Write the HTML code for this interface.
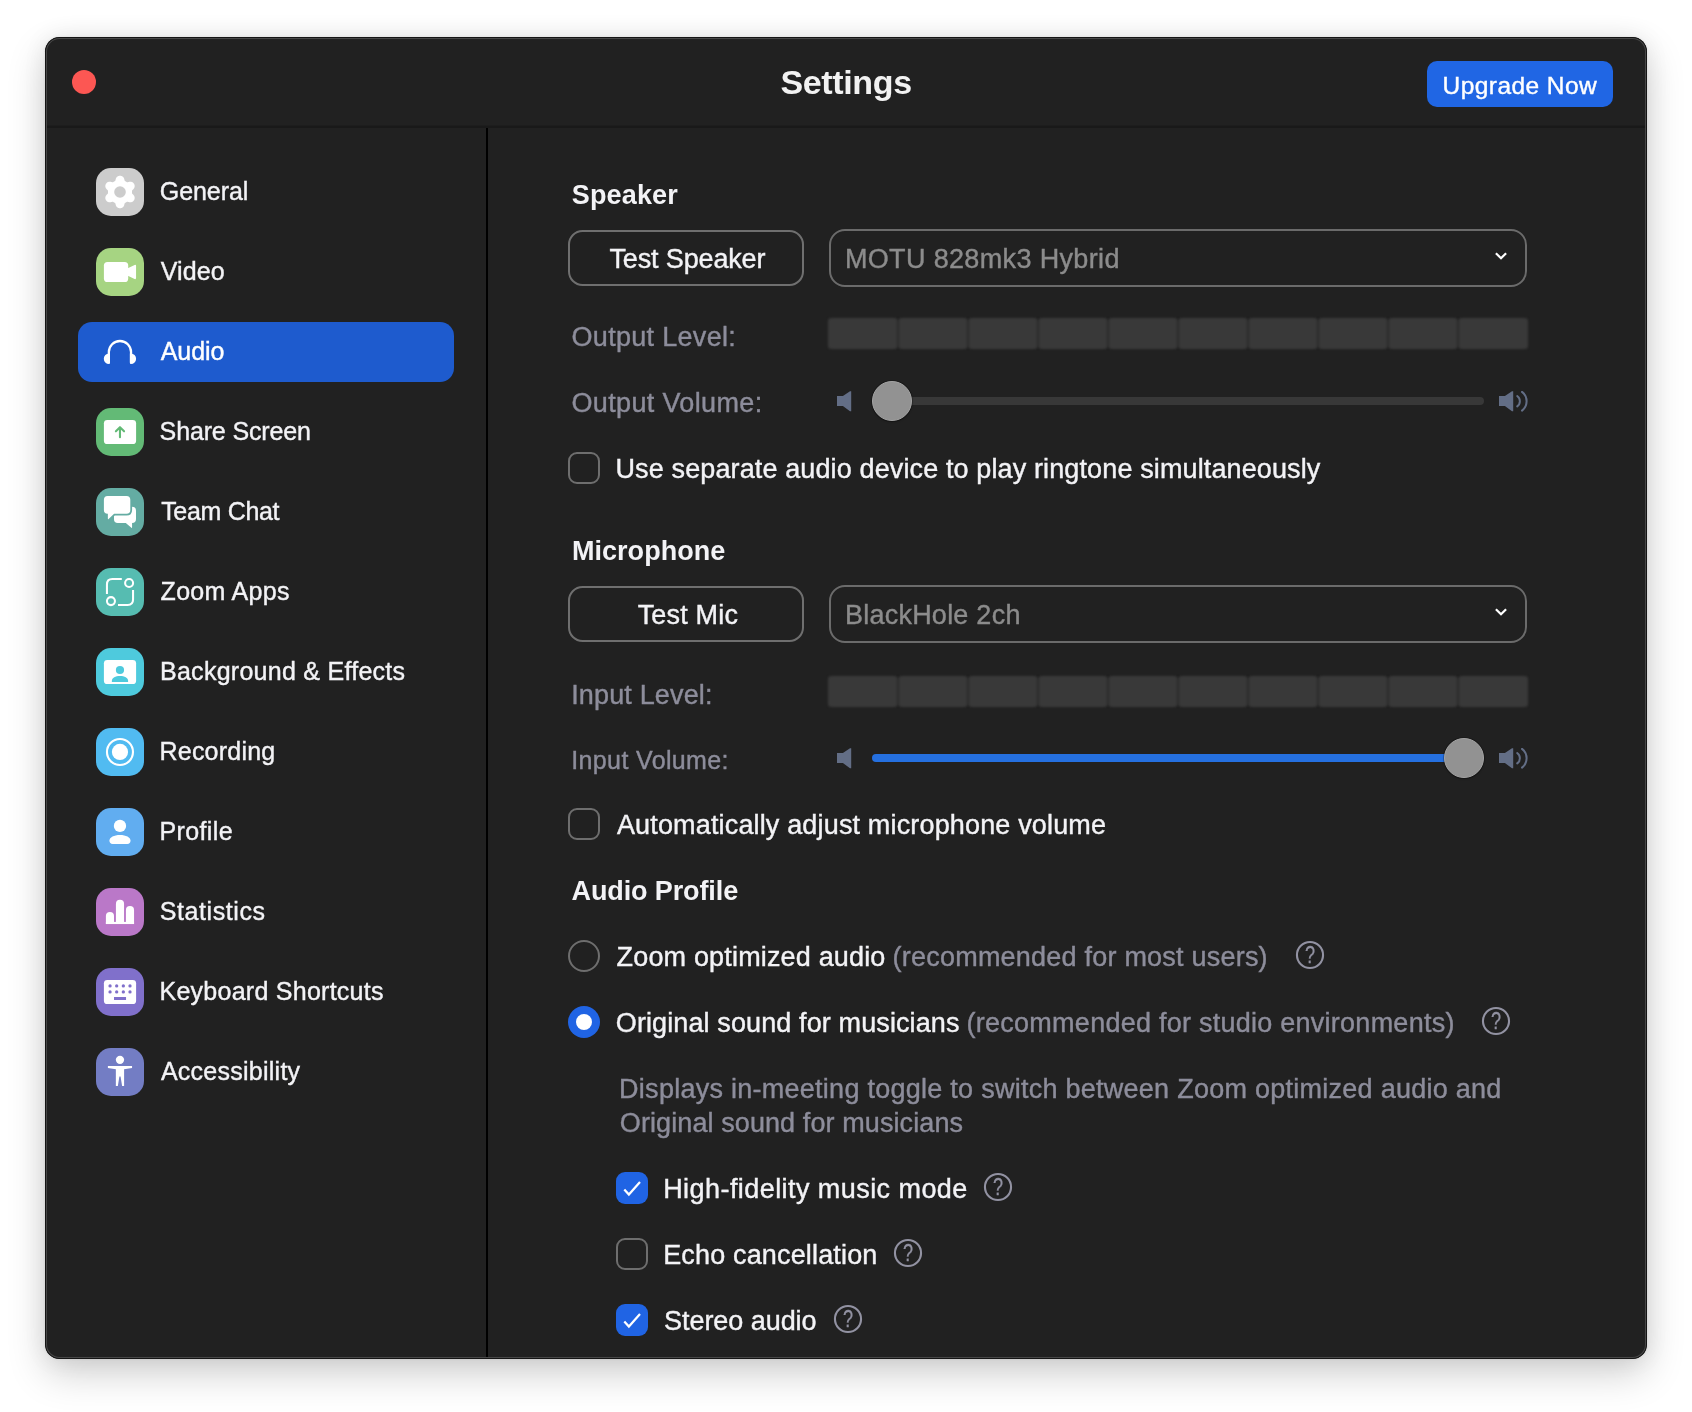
<!DOCTYPE html>
<html lang="en"><head><meta charset="utf-8"><title>Settings</title>
<style>
html,body{margin:0;padding:0;}
body{width:1692px;height:1412px;background:#ffffff;position:relative;overflow:hidden;font-family:"Liberation Sans",Arial,sans-serif;}
.shadow{position:absolute;left:45px;top:37px;width:1602px;height:1322px;border-radius:14.5px;
  box-shadow:0 15px 38px rgba(0,0,0,0.185),0 0 24px rgba(0,0,0,0.07),0 0 3px rgba(0,0,0,0.08);}
.window{position:absolute;left:45px;top:37px;width:1602px;height:1322px;border-radius:14.5px;background:#212121;overflow:hidden;}
.window:after{content:"";position:absolute;left:0;top:0;right:0;bottom:0;border-radius:14.5px;box-shadow:inset 0 0 0 1px #151515,inset 0 0 0 2px #474747;pointer-events:none;}
.abs,.t,.window div,.window svg,.window button{position:absolute;}
.t{white-space:pre;display:block;-webkit-text-stroke:0.4px currentColor;}
.t.b{-webkit-text-stroke:0;}
.layer{position:absolute;left:-45px;top:-37px;width:1692px;height:1412px;will-change:transform;}
.hline{left:45px;top:125px;width:1602px;height:3px;background:linear-gradient(#1d1d1d 0,#1d1d1d 33%,#191919 33%,#191919 100%);}
.vline{left:486px;top:128px;width:2px;height:1232px;background:#000000;}
.close{left:72px;top:70px;width:24px;height:24px;border-radius:50%;background:#fc5753;}
.upgrade{left:1427px;top:61px;width:186px;height:46px;border-radius:10px;background:#2066e4;}
.sel{left:78px;top:322px;width:376px;height:60px;border-radius:14px;background:#1e5bce;}
.ico{width:48px;height:48px;border-radius:15px;left:96px;}
.btn{border:2px solid #6f6f6f;border-radius:14.5px;box-sizing:border-box;background:transparent;}
.dd{border:2px solid #6b6b6b;border-radius:16px;box-sizing:border-box;}
.seg{width:68.4px;height:31.8px;background:#393939;border-radius:3px;filter:blur(0.9px);}
.segbg{width:692px;height:29.8px;background:#2c2c2c;filter:blur(0.9px);}
.track{height:8px;border-radius:4px;background:#383838;}
.track.on{background:#2570e0;}
.thumb{width:40px;height:40px;border-radius:50%;background:#929292;box-sizing:border-box;border:1px solid #a4a4a4;box-shadow:0 0 0 1px rgba(0,0,0,0.22),0 1px 2px rgba(0,0,0,0.25);}
.cb{width:32px;height:32px;box-sizing:border-box;border:2px solid #6e6e6e;border-radius:9px;}
.cb.on{border:none;background:#2064e4;}
.rb{width:32px;height:32px;box-sizing:border-box;border:2px solid #6e6e6e;border-radius:50%;}
.rb.on{border:none;background:#2064e4;}
.rb.on:after{content:"";position:absolute;left:8px;top:8px;width:16px;height:16px;border-radius:50%;background:#ffffff;}
</style></head>
<body>
<div class="shadow"></div>
<div class="window"><div class="layer">
<div class="hline"></div><div class="vline"></div>
<div class="close"></div>
<span class="t b" style="left:780.5px;top:65.00px;font-size:34px;line-height:34px;color:#f2f2f2;letter-spacing:-0.369px;font-weight:700;">Settings</span>
<button class="upgrade" style="border:none"></button><span class="t" style="left:1442.5px;top:74.00px;font-size:24.5px;line-height:24.5px;color:#ffffff;letter-spacing:0.446px;">Upgrade Now</span>
<div class="sidebar" style="left:0;top:0">
<div class="sel"></div>
<div class="ico" style="top:168px;background:#cccccc"><svg width="48" height="48" viewBox="0 0 48 48" style="left:0;top:0"><path d="M24.00 7.74 L24.28 7.75 L24.57 7.77 L24.85 7.82 L25.13 7.88 L25.40 7.97 L25.67 8.07 L25.94 8.19 L26.20 8.33 L26.46 8.49 L26.70 8.67 L26.94 8.87 L27.17 9.09 L27.39 9.34 L27.59 9.61 L27.78 9.91 L27.95 10.24 L28.10 10.60 L28.23 10.99 L28.34 11.40 L28.44 11.80 L28.54 12.17 L28.65 12.49 L28.78 12.75 L28.93 12.94 L29.09 13.08 L29.27 13.20 L29.45 13.30 L29.63 13.40 L29.82 13.50 L30.00 13.61 L30.18 13.71 L30.36 13.82 L30.54 13.93 L30.72 14.04 L30.91 14.13 L31.12 14.20 L31.36 14.24 L31.64 14.22 L31.97 14.15 L32.35 14.05 L32.75 13.94 L33.15 13.83 L33.56 13.75 L33.95 13.70 L34.32 13.68 L34.67 13.70 L35.01 13.74 L35.33 13.80 L35.63 13.89 L35.93 13.99 L36.20 14.12 L36.47 14.26 L36.72 14.41 L36.96 14.58 L37.18 14.77 L37.39 14.97 L37.59 15.18 L37.77 15.40 L37.93 15.63 L38.08 15.87 L38.22 16.12 L38.34 16.38 L38.44 16.64 L38.52 16.92 L38.59 17.20 L38.63 17.48 L38.66 17.78 L38.67 18.07 L38.66 18.37 L38.63 18.68 L38.57 18.98 L38.50 19.29 L38.39 19.60 L38.26 19.91 L38.09 20.22 L37.89 20.54 L37.65 20.85 L37.38 21.16 L37.09 21.46 L36.79 21.75 L36.51 22.02 L36.29 22.27 L36.14 22.51 L36.04 22.73 L36.00 22.95 L35.99 23.16 L35.99 23.37 L35.99 23.58 L36.00 23.79 L36.00 24.00 L36.00 24.21 L35.99 24.42 L35.99 24.63 L35.99 24.84 L36.00 25.05 L36.04 25.27 L36.14 25.49 L36.29 25.73 L36.51 25.98 L36.79 26.25 L37.09 26.54 L37.38 26.84 L37.65 27.15 L37.89 27.46 L38.09 27.78 L38.26 28.09 L38.39 28.40 L38.50 28.71 L38.57 29.02 L38.63 29.32 L38.66 29.63 L38.67 29.93 L38.66 30.22 L38.63 30.52 L38.59 30.80 L38.52 31.08 L38.44 31.36 L38.34 31.62 L38.22 31.88 L38.08 32.13 L37.93 32.37 L37.77 32.60 L37.59 32.82 L37.39 33.03 L37.18 33.23 L36.96 33.42 L36.72 33.59 L36.47 33.74 L36.20 33.88 L35.93 34.01 L35.63 34.11 L35.33 34.20 L35.01 34.26 L34.67 34.30 L34.32 34.32 L33.95 34.30 L33.56 34.25 L33.15 34.17 L32.75 34.06 L32.35 33.95 L31.97 33.85 L31.64 33.78 L31.36 33.76 L31.12 33.80 L30.91 33.87 L30.72 33.96 L30.54 34.07 L30.36 34.18 L30.18 34.29 L30.00 34.39 L29.82 34.50 L29.63 34.60 L29.45 34.70 L29.27 34.80 L29.09 34.92 L28.93 35.06 L28.78 35.25 L28.65 35.51 L28.54 35.83 L28.44 36.20 L28.34 36.60 L28.23 37.01 L28.10 37.40 L27.95 37.76 L27.78 38.09 L27.59 38.39 L27.39 38.66 L27.17 38.91 L26.94 39.13 L26.70 39.33 L26.46 39.51 L26.20 39.67 L25.94 39.81 L25.67 39.93 L25.40 40.03 L25.13 40.12 L24.85 40.18 L24.57 40.23 L24.28 40.25 L24.00 40.26 L23.72 40.25 L23.43 40.23 L23.15 40.18 L22.87 40.12 L22.60 40.03 L22.33 39.93 L22.06 39.81 L21.80 39.67 L21.54 39.51 L21.30 39.33 L21.06 39.13 L20.83 38.91 L20.61 38.66 L20.41 38.39 L20.22 38.09 L20.05 37.76 L19.90 37.40 L19.77 37.01 L19.66 36.60 L19.56 36.20 L19.46 35.83 L19.35 35.51 L19.22 35.25 L19.07 35.06 L18.91 34.92 L18.73 34.80 L18.55 34.70 L18.37 34.60 L18.18 34.50 L18.00 34.39 L17.82 34.29 L17.64 34.18 L17.46 34.07 L17.28 33.96 L17.09 33.87 L16.88 33.80 L16.64 33.76 L16.36 33.78 L16.03 33.85 L15.65 33.95 L15.25 34.06 L14.85 34.17 L14.44 34.25 L14.05 34.30 L13.68 34.32 L13.33 34.30 L12.99 34.26 L12.67 34.20 L12.37 34.11 L12.07 34.01 L11.80 33.88 L11.53 33.74 L11.28 33.59 L11.04 33.42 L10.82 33.23 L10.61 33.03 L10.41 32.82 L10.23 32.60 L10.07 32.37 L9.92 32.13 L9.78 31.88 L9.66 31.62 L9.56 31.36 L9.48 31.08 L9.41 30.80 L9.37 30.52 L9.34 30.22 L9.33 29.93 L9.34 29.63 L9.37 29.32 L9.43 29.02 L9.50 28.71 L9.61 28.40 L9.74 28.09 L9.91 27.78 L10.11 27.46 L10.35 27.15 L10.62 26.84 L10.91 26.54 L11.21 26.25 L11.49 25.98 L11.71 25.73 L11.86 25.49 L11.96 25.27 L12.00 25.05 L12.01 24.84 L12.01 24.63 L12.01 24.42 L12.00 24.21 L12.00 24.00 L12.00 23.79 L12.01 23.58 L12.01 23.37 L12.01 23.16 L12.00 22.95 L11.96 22.73 L11.86 22.51 L11.71 22.27 L11.49 22.02 L11.21 21.75 L10.91 21.46 L10.62 21.16 L10.35 20.85 L10.11 20.54 L9.91 20.22 L9.74 19.91 L9.61 19.60 L9.50 19.29 L9.43 18.98 L9.37 18.68 L9.34 18.37 L9.33 18.07 L9.34 17.78 L9.37 17.48 L9.41 17.20 L9.48 16.92 L9.56 16.64 L9.66 16.38 L9.78 16.12 L9.92 15.87 L10.07 15.63 L10.23 15.40 L10.41 15.18 L10.61 14.97 L10.82 14.77 L11.04 14.58 L11.28 14.41 L11.53 14.26 L11.80 14.12 L12.07 13.99 L12.37 13.89 L12.67 13.80 L12.99 13.74 L13.33 13.70 L13.68 13.68 L14.05 13.70 L14.44 13.75 L14.85 13.83 L15.25 13.94 L15.65 14.05 L16.03 14.15 L16.36 14.22 L16.64 14.24 L16.88 14.20 L17.09 14.13 L17.28 14.04 L17.46 13.93 L17.64 13.82 L17.82 13.71 L18.00 13.61 L18.18 13.50 L18.37 13.40 L18.55 13.30 L18.73 13.20 L18.91 13.08 L19.07 12.94 L19.22 12.75 L19.35 12.49 L19.46 12.17 L19.56 11.80 L19.66 11.40 L19.77 10.99 L19.90 10.60 L20.05 10.24 L20.22 9.91 L20.41 9.61 L20.61 9.34 L20.83 9.09 L21.06 8.87 L21.30 8.67 L21.54 8.49 L21.80 8.33 L22.06 8.19 L22.33 8.07 L22.60 7.97 L22.87 7.88 L23.15 7.82 L23.43 7.77 L23.72 7.75 Z" fill="#ffffff"/><circle cx="24" cy="24" r="5.8" fill="#cccccc"/></svg></div>
<span class="t" style="left:159.8px;top:179.00px;font-size:25px;line-height:25px;color:#f3f3f6;letter-spacing:-0.073px;">General</span>
<div class="ico" style="top:248px;background:#a6d482"><svg width="48" height="48" viewBox="0 0 48 48" style="left:0;top:0"><g fill="#ffffff"><rect x="7.9" y="13.9" width="24.3" height="20.2" rx="3.6"/><path d="M31.8 20.3 L38.6 16.95 Q40.05 16.4 40.05 17.9 V30.1 Q40.05 31.6 38.6 31.05 L31.8 27.7 Z"/></g></svg></div>
<span class="t" style="left:160.8px;top:259.00px;font-size:25px;line-height:25px;color:#f3f3f6;letter-spacing:0.074px;">Video</span>
<div class="ico" style="top:328px;background:transparent"><svg width="48" height="48" viewBox="0 0 48 48" style="left:0;top:0"><path d="M12.85 34.6 V24.1 A11.1 11.1 0 0 1 35.05 24.1 V34.6" fill="none" stroke="#ffffff" stroke-width="2.3"/><g fill="#ffffff"><path d="M14 25.55 H13 A5.2 5.27 0 0 0 13 36.1 Q14 36.1 14 35 Z"/><path d="M33.9 25.55 H34.9 A5.2 5.27 0 0 1 34.9 36.1 Q33.9 36.1 33.9 35 Z"/></g></svg></div>
<span class="t" style="left:160.8px;top:339.00px;font-size:25px;line-height:25px;color:#ffffff;letter-spacing:-0.098px;">Audio</span>
<div class="ico" style="top:408px;background:#63ba76"><svg width="48" height="48" viewBox="0 0 48 48" style="left:0;top:0"><rect x="7.9" y="11.9" width="32.2" height="24.15" rx="3.4" fill="#ffffff"/><path d="M23.97 29.2 V19.4 M19.9 23.3 L23.97 19.2 L28.05 23.3" fill="none" stroke="#63ba76" stroke-width="2.1" stroke-linecap="round" stroke-linejoin="round"/></svg></div>
<span class="t" style="left:159.6px;top:419.00px;font-size:25px;line-height:25px;color:#f3f3f6;letter-spacing:-0.137px;">Share Screen</span>
<div class="ico" style="top:488px;background:#64aca3"><svg width="48" height="48" viewBox="0 0 48 48" style="left:0;top:0"><path d="M21.8 18.8 H36 Q40 18.8 40 22.8 V31.1 Q40 35.1 36.06 35.1 V39.4 Q36.06 40.2 35.4 39.7 L29.8 35.1 H21.8 Q18 35.1 18 31.3 V22.6 Q18 18.8 21.8 18.8 Z" fill="#ffffff"/><path d="M11.6 7.9 H30.5 Q34.3 7.9 34.3 11.7 V21.95 Q34.3 25.75 30.5 25.75 H18.1 L12.6 30.9 Q11.87 31.5 11.87 30.5 V25.75 H11.6 Q7.9 25.75 7.9 22 V11.7 Q7.9 7.9 11.6 7.9 Z" fill="#ffffff" stroke="#64aca3" stroke-width="3.6" paint-order="stroke" stroke-linejoin="round"/></svg></div>
<span class="t" style="left:161.2px;top:499.00px;font-size:25px;line-height:25px;color:#f3f3f6;letter-spacing:-0.313px;">Team Chat</span>
<div class="ico" style="top:568px;background:#56bcb1"><svg width="48" height="48" viewBox="0 0 48 48" style="left:0;top:0"><g fill="none" stroke="#ffffff" stroke-width="2.05"><path d="M25.8 10.95 H16.4 Q10.95 10.95 10.95 16.4 V25.95"/><path d="M22 37.05 H31.6 Q37.05 37.05 37.05 31.6 V22"/><circle cx="33.1" cy="15" r="4"/><circle cx="14.95" cy="33.1" r="4"/></g></svg></div>
<span class="t" style="left:160.6px;top:579.00px;font-size:25px;line-height:25px;color:#f3f3f6;letter-spacing:0.298px;">Zoom Apps</span>
<div class="ico" style="top:648px;background:#4ecadd"><svg width="48" height="48" viewBox="0 0 48 48" style="left:0;top:0"><rect x="7.9" y="11.9" width="32.2" height="24.15" rx="3.4" fill="#ffffff"/><circle cx="23.97" cy="22" r="4.1" fill="#4ecadd"/><path d="M15.85 33.9 V32.7 C15.85 29.9 19.5 27.95 23.97 27.95 C28.5 27.95 32.1 29.9 32.1 32.7 V33.9 Z" fill="#4ecadd"/></svg></div>
<span class="t" style="left:160.0px;top:659.00px;font-size:25px;line-height:25px;color:#f3f3f6;letter-spacing:0.269px;">Background &amp; Effects</span>
<div class="ico" style="top:728px;background:#51bbf1"><svg width="48" height="48" viewBox="0 0 48 48" style="left:0;top:0"><circle cx="23.97" cy="23.97" r="13" fill="none" stroke="#ffffff" stroke-width="2.1"/><circle cx="23.97" cy="23.97" r="8.1" fill="#ffffff"/></svg></div>
<span class="t" style="left:159.5px;top:739.00px;font-size:25px;line-height:25px;color:#f3f3f6;letter-spacing:0.215px;">Recording</span>
<div class="ico" style="top:808px;background:#61adf0"><svg width="48" height="48" viewBox="0 0 48 48" style="left:0;top:0"><g fill="#ffffff"><circle cx="23.97" cy="17.95" r="6.15"/><path d="M13.45 32.6 C13.45 29.3 18 26.95 23.97 26.95 C30 26.95 34.5 29.3 34.5 32.6 C34.5 34.8 33.3 36.05 31.4 36.05 H16.55 C14.65 36.05 13.45 34.8 13.45 32.6 Z"/></g></svg></div>
<span class="t" style="left:159.5px;top:819.00px;font-size:25px;line-height:25px;color:#f3f3f6;letter-spacing:0.371px;">Profile</span>
<div class="ico" style="top:888px;background:#ba78c8"><svg width="48" height="48" viewBox="0 0 48 48" style="left:0;top:0"><g fill="#ffffff"><path d="M9.9 36.05 V28 A4.05 4.05 0 0 1 18 28 V36.05 Z"/><path d="M19.92 36.05 V15.9 A4.06 4.06 0 0 1 28.05 15.9 V36.05 Z"/><path d="M29.92 36.05 V21.95 A4.06 4.06 0 0 1 38.05 21.95 V36.05 Z"/><rect x="9.9" y="33.9" width="28.15" height="2.15"/></g></svg></div>
<span class="t" style="left:159.8px;top:899.00px;font-size:25px;line-height:25px;color:#f3f3f6;letter-spacing:0.574px;">Statistics</span>
<div class="ico" style="top:968px;background:#8070cb"><svg width="48" height="48" viewBox="0 0 48 48" style="left:0;top:0"><rect x="7.9" y="11.9" width="32.2" height="24.15" rx="3.4" fill="#ffffff"/><g fill="#8070cb"><circle cx="14.05" cy="17.95" r="1.65"/><circle cx="20.67" cy="17.95" r="1.65"/><circle cx="27.34" cy="17.95" r="1.65"/><circle cx="34.0" cy="17.95" r="1.65"/><circle cx="14.05" cy="23.97" r="1.65"/><circle cx="20.67" cy="23.97" r="1.65"/><circle cx="27.34" cy="23.97" r="1.65"/><circle cx="34.0" cy="23.97" r="1.65"/><rect x="18" y="29" width="12.05" height="3"/></g></svg></div>
<span class="t" style="left:159.5px;top:979.00px;font-size:25px;line-height:25px;color:#f3f3f6;letter-spacing:0.259px;">Keyboard Shortcuts</span>
<div class="ico" style="top:1048px;background:#737dc4"><svg width="48" height="48" viewBox="0 0 48 48" style="left:0;top:0"><g fill="#ffffff"><circle cx="23.97" cy="11.87" r="4.15"/><path d="M11.9 17.95 H36.05 V20 L28.1 21.25 V38 H26.1 L24.55 28.6 H23.4 L21.85 38 H19.85 V21.25 L11.9 20 Z"/></g></svg></div>
<span class="t" style="left:160.9px;top:1059.00px;font-size:25px;line-height:25px;color:#f3f3f6;letter-spacing:0.257px;">Accessibility</span>
</div>
<div class="content" style="left:0;top:0">
<span class="t b" style="left:571.8px;top:182.00px;font-size:27px;line-height:27px;color:#f3f3f6;letter-spacing:0.151px;font-weight:700;">Speaker</span>
<button class="btn" style="left:568px;top:230px;width:236px;height:56px"></button>
<span class="t" style="left:609.5px;top:246.00px;font-size:27px;line-height:27px;color:#f3f3f6;letter-spacing:-0.146px;">Test Speaker</span>
<div class="dd" style="left:829px;top:229px;width:698px;height:58px"></div>
<span class="t" style="left:844.9px;top:246.00px;font-size:27px;line-height:27px;color:#8c8c8c;letter-spacing:0.350px;">MOTU 828mk3 Hybrid</span>
<svg style="left:1493px;top:249.6px" width="16" height="12" viewBox="0 0 16 12"><path d="M2.9 3.2 L8 8.3 L13.1 3.2" fill="none" stroke="#ffffff" stroke-width="2.2" stroke-linecap="butt" stroke-linejoin="miter"/></svg>
<span class="t" style="left:571.5px;top:324.00px;font-size:27px;line-height:27px;color:#8d8d9b;letter-spacing:0.304px;">Output Level:</span>
<div class="segbg" style="left:832px;top:318.7px"></div><div class="seg" style="left:828px;top:317.7px;width:68.6px"></div><div class="seg" style="left:899px;top:317.7px;width:67.6px"></div><div class="seg" style="left:969px;top:317.7px;width:67.6px"></div><div class="seg" style="left:1039px;top:317.7px;width:67.6px"></div><div class="seg" style="left:1109px;top:317.7px;width:67.6px"></div><div class="seg" style="left:1179px;top:317.7px;width:67.6px"></div><div class="seg" style="left:1249px;top:317.7px;width:67.6px"></div><div class="seg" style="left:1319px;top:317.7px;width:67.6px"></div><div class="seg" style="left:1389px;top:317.7px;width:67.6px"></div><div class="seg" style="left:1459px;top:317.7px;width:68.9px"></div>
<span class="t" style="left:571.5px;top:390.00px;font-size:27px;line-height:27px;color:#8d8d9b;letter-spacing:0.349px;">Output Volume:</span>
<svg style="left:836.9px;top:391px" width="16" height="22" viewBox="0 0 16 22"><path d="M0 5 H5.9 L13 0.25 H14.2 V20.3 H13 L5.9 15.05 H0 Z" fill="#636e86"/></svg>
<div class="track" style="left:872px;top:397px;width:612px"></div>
<div class="thumb" style="left:872px;top:381px"></div>
<svg style="left:1498.8px;top:391px" width="32" height="22" viewBox="0 0 32 22"><path d="M0 5 H5.9 L13 0.25 H14.2 V20.3 H13 L5.9 15.05 H0 Z" fill="#636e86"/><path d="M18.2 5 A6.4 6.4 0 0 1 18.2 15.4" fill="none" stroke="#636e86" stroke-width="2" stroke-linecap="round"/><path d="M23 0.9 A11.8 11.8 0 0 1 23 19.6" fill="none" stroke="#636e86" stroke-width="2" stroke-linecap="round"/></svg>
<div class="cb" style="left:568px;top:452px"></div>
<span class="t" style="left:615.5px;top:456.00px;font-size:27px;line-height:27px;color:#f3f3f6;letter-spacing:0.124px;">Use separate audio device to play ringtone simultaneously</span>
<span class="t b" style="left:571.9px;top:538.00px;font-size:27px;line-height:27px;color:#f3f3f6;letter-spacing:0.051px;font-weight:700;">Microphone</span>
<button class="btn" style="left:568px;top:586px;width:236px;height:56px"></button>
<span class="t" style="left:637.7px;top:602.00px;font-size:27px;line-height:27px;color:#f3f3f6;letter-spacing:0.182px;">Test Mic</span>
<div class="dd" style="left:829px;top:585px;width:698px;height:58px"></div>
<span class="t" style="left:844.9px;top:602.00px;font-size:27px;line-height:27px;color:#8c8c8c;letter-spacing:0.243px;">BlackHole 2ch</span>
<svg style="left:1493px;top:605.6px" width="16" height="12" viewBox="0 0 16 12"><path d="M2.9 3.2 L8 8.3 L13.1 3.2" fill="none" stroke="#ffffff" stroke-width="2.2" stroke-linecap="butt" stroke-linejoin="miter"/></svg>
<span class="t" style="left:571.2px;top:682.00px;font-size:27px;line-height:27px;color:#8d8d9b;letter-spacing:0.155px;">Input Level:</span>
<div class="segbg" style="left:832px;top:676.7px"></div><div class="seg" style="left:828px;top:675.7px;width:68.6px"></div><div class="seg" style="left:899px;top:675.7px;width:67.6px"></div><div class="seg" style="left:969px;top:675.7px;width:67.6px"></div><div class="seg" style="left:1039px;top:675.7px;width:67.6px"></div><div class="seg" style="left:1109px;top:675.7px;width:67.6px"></div><div class="seg" style="left:1179px;top:675.7px;width:67.6px"></div><div class="seg" style="left:1249px;top:675.7px;width:67.6px"></div><div class="seg" style="left:1319px;top:675.7px;width:67.6px"></div><div class="seg" style="left:1389px;top:675.7px;width:67.6px"></div><div class="seg" style="left:1459px;top:675.7px;width:68.9px"></div>
<span class="t" style="left:571.3px;top:748.00px;font-size:25px;line-height:25px;color:#8d8d9b;letter-spacing:0.358px;">Input Volume:</span>
<svg style="left:836.9px;top:748px" width="16" height="22" viewBox="0 0 16 22"><path d="M0 5 H5.9 L13 0.25 H14.2 V20.3 H13 L5.9 15.05 H0 Z" fill="#636e86"/></svg>
<div class="track on" style="left:872px;top:754px;width:600px"></div>
<div class="thumb" style="left:1444px;top:738px"></div>
<svg style="left:1498.8px;top:748px" width="32" height="22" viewBox="0 0 32 22"><path d="M0 5 H5.9 L13 0.25 H14.2 V20.3 H13 L5.9 15.05 H0 Z" fill="#636e86"/><path d="M18.2 5 A6.4 6.4 0 0 1 18.2 15.4" fill="none" stroke="#636e86" stroke-width="2" stroke-linecap="round"/><path d="M23 0.9 A11.8 11.8 0 0 1 23 19.6" fill="none" stroke="#636e86" stroke-width="2" stroke-linecap="round"/></svg>
<div class="cb" style="left:568px;top:808px"></div>
<span class="t" style="left:616.9px;top:812.00px;font-size:27px;line-height:27px;color:#f3f3f6;letter-spacing:0.160px;">Automatically adjust microphone volume</span>
<span class="t b" style="left:571.5px;top:878.00px;font-size:27px;line-height:27px;color:#f3f3f6;letter-spacing:-0.111px;font-weight:700;">Audio Profile</span>
<div class="rb" style="left:568px;top:940px"></div>
<span class="t" style="left:616.6px;top:944.00px;font-size:27px;line-height:27px;color:#f3f3f6;letter-spacing:0.165px;">Zoom optimized audio</span>
<span class="t" style="left:892.6px;top:944.00px;font-size:27px;line-height:27px;color:#8d8d9b;letter-spacing:0.218px;">(recommended for most users)</span>
<svg class="help" style="left:1294.0px;top:939.1px" width="32" height="32" viewBox="0 0 32 32"><circle cx="16" cy="16" r="13.05" fill="none" stroke="#9292a2" stroke-width="2.1"/><text x="0" y="24.2" text-anchor="middle" transform="translate(16.1 0) scale(0.78 1)" font-family="Liberation Sans, Arial, sans-serif" font-size="23.2" fill="#9292a2" stroke="#9292a2" stroke-width="0.3">?</text></svg>
<div class="rb on" style="left:568px;top:1006px"></div>
<span class="t" style="left:615.8px;top:1010.00px;font-size:27px;line-height:27px;color:#f3f3f6;letter-spacing:0.112px;">Original sound for musicians</span>
<span class="t" style="left:966.6px;top:1010.00px;font-size:27px;line-height:27px;color:#8d8d9b;letter-spacing:0.253px;">(recommended for studio environments)</span>
<svg class="help" style="left:1480.3px;top:1005.1px" width="32" height="32" viewBox="0 0 32 32"><circle cx="16" cy="16" r="13.05" fill="none" stroke="#9292a2" stroke-width="2.1"/><text x="0" y="24.2" text-anchor="middle" transform="translate(16.1 0) scale(0.78 1)" font-family="Liberation Sans, Arial, sans-serif" font-size="23.2" fill="#9292a2" stroke="#9292a2" stroke-width="0.3">?</text></svg>
<span class="t" style="left:619.1px;top:1076.00px;font-size:27px;line-height:27px;color:#8d8d9b;letter-spacing:0.262px;">Displays in-meeting toggle to switch between Zoom optimized audio and</span>
<span class="t" style="left:619.8px;top:1110.00px;font-size:27px;line-height:27px;color:#8d8d9b;letter-spacing:0.094px;">Original sound for musicians</span>
<div class="cb on" style="left:616px;top:1172px"><svg style="left:0;top:0" width="32" height="32" viewBox="0 0 32 32"><path d="M8.3 17.4 L12.9 22.6 L24 10" fill="none" stroke="#ffffff" stroke-width="2.2" stroke-linecap="butt" stroke-linejoin="miter"/></svg></div>
<span class="t" style="left:663.2px;top:1176.00px;font-size:27px;line-height:27px;color:#f3f3f6;letter-spacing:0.436px;">High-fidelity music mode</span>
<svg class="help" style="left:982.0px;top:1171.1px" width="32" height="32" viewBox="0 0 32 32"><circle cx="16" cy="16" r="13.05" fill="none" stroke="#9292a2" stroke-width="2.1"/><text x="0" y="24.2" text-anchor="middle" transform="translate(16.1 0) scale(0.78 1)" font-family="Liberation Sans, Arial, sans-serif" font-size="23.2" fill="#9292a2" stroke="#9292a2" stroke-width="0.3">?</text></svg>
<div class="cb" style="left:616px;top:1238px"></div>
<span class="t" style="left:663.2px;top:1242.00px;font-size:27px;line-height:27px;color:#f3f3f6;letter-spacing:0.157px;">Echo cancellation</span>
<svg class="help" style="left:892.0px;top:1237.1px" width="32" height="32" viewBox="0 0 32 32"><circle cx="16" cy="16" r="13.05" fill="none" stroke="#9292a2" stroke-width="2.1"/><text x="0" y="24.2" text-anchor="middle" transform="translate(16.1 0) scale(0.78 1)" font-family="Liberation Sans, Arial, sans-serif" font-size="23.2" fill="#9292a2" stroke="#9292a2" stroke-width="0.3">?</text></svg>
<div class="cb on" style="left:616px;top:1304px"><svg style="left:0;top:0" width="32" height="32" viewBox="0 0 32 32"><path d="M8.3 17.4 L12.9 22.6 L24 10" fill="none" stroke="#ffffff" stroke-width="2.2" stroke-linecap="butt" stroke-linejoin="miter"/></svg></div>
<span class="t" style="left:664.1px;top:1308.00px;font-size:27px;line-height:27px;color:#f3f3f6;letter-spacing:-0.060px;">Stereo audio</span>
<svg class="help" style="left:831.7px;top:1303.1px" width="32" height="32" viewBox="0 0 32 32"><circle cx="16" cy="16" r="13.05" fill="none" stroke="#9292a2" stroke-width="2.1"/><text x="0" y="24.2" text-anchor="middle" transform="translate(16.1 0) scale(0.78 1)" font-family="Liberation Sans, Arial, sans-serif" font-size="23.2" fill="#9292a2" stroke="#9292a2" stroke-width="0.3">?</text></svg>
</div>
</div></div>
</body></html>
